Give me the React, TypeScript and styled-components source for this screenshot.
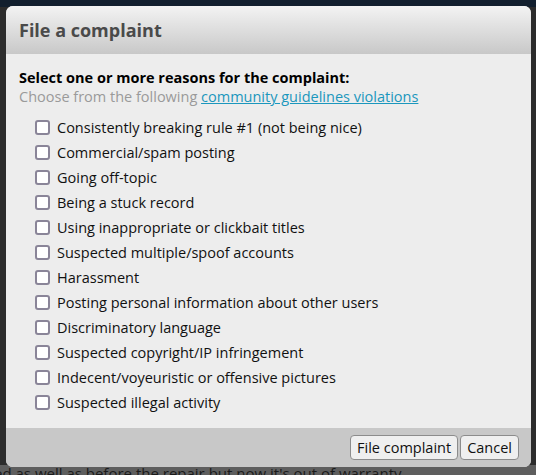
import { useState } from "react";
import styled, { createGlobalStyle } from "styled-components";

const reasons = [
  "Consistently breaking rule #1 (not being nice)",
  "Commercial/spam posting",
  "Going off-topic",
  "Being a stuck record",
  "Using inappropriate or clickbait titles",
  "Suspected multiple/spoof accounts",
  "Harassment",
  "Posting personal information about other users",
  "Discriminatory language",
  "Suspected copyright/IP infringement",
  "Indecent/voyeuristic or offensive pictures",
  "Suspected illegal activity",
];

const GlobalStyle = createGlobalStyle`
  html, body {
    margin: 0;
    padding: 0;
    background: #2e2e2e;
    font-family: "Open Sans", "Noto Sans", sans-serif;
    overflow: hidden;
  }
`;

const Page = styled.div`
  position: relative;
  width: 536px;
  height: 475px;
  display: flex;
  flex-direction: column;
  background: #2c2c2c;
`;

const TopBar = styled.div`
  height: 7px;
  background: #121f2e;
`;

const PageBody = styled.div`
  flex: 1;
`;

const PageText = styled.div`
  height: 10px;
  text-indent: -6px;
  background: #5e5e5e;
  color: #1a1a1a;
  font-size: 15px;
  line-height: 17px;
  overflow: hidden;
  white-space: nowrap;
`;

const Dialog = styled.div`
  position: absolute;
  top: 6px;
  left: 6px;
  width: 525px;
  height: 461px;
  border-radius: 7px;
  overflow: hidden;
  display: flex;
  flex-direction: column;
  background: #ededed;
`;

const Header = styled.div`
  height: 48px;
  display: flex;
  align-items: center;
  padding: 0 13px;
  background: linear-gradient(#f3f3f3, #c8c8c8);
`;

const Title = styled.h2`
  margin: 0;
  font-size: 18px;
  font-weight: 700;
  color: #4a4a4a;
`;

const Body = styled.div`
  flex: 1;
  padding: 14px 13px 0;
`;

const Heading = styled.div`
  font-size: 14.5px;
  line-height: 19px;
  font-weight: 700;
  color: #000;
`;

const Hint = styled.div`
  font-size: 14.5px;
  line-height: 19px;
  color: #9a9a9a;

  a {
    color: #1b97bd;
    text-decoration: underline;
  }
`;

const List = styled.ul`
  list-style: none;
  margin: 9px 0 0;
  padding: 0 0 0 16px;
`;

const Row = styled.li`
  height: 25px;
  display: flex;
  align-items: center;
  gap: 7px;
  font-size: 14.5px;
  color: #111;
  cursor: pointer;
`;

const Box = styled.span<{ $checked: boolean }>`
  width: 15px;
  height: 15px;
  box-sizing: border-box;
  border: 2px solid #8a8598;
  border-radius: 3px;
  background: ${(p) => (p.$checked ? "#1b97bd" : "#fff")};
  flex-shrink: 0;
`;

const Footer = styled.div`
  height: 39px;
  display: flex;
  align-items: center;
  justify-content: flex-end;
  gap: 2px;
  padding: 0 12px;
  background: #c8c8c8;
`;

const Button = styled.button`
  height: 25px;
  padding: 0 6px;
  font-family: inherit;
  font-size: 14.5px;
  color: #111;
  background: #efefef;
  border: 1px solid #8c8c8c;
  border-radius: 4px;
  cursor: pointer;
`;

export default function App() {
  const [checked, setChecked] = useState<boolean[]>(reasons.map(() => false));

  const toggle = (i: number) =>
    setChecked((prev) => prev.map((v, j) => (j === i ? !v : v)));

  return (
    <>
      <GlobalStyle />
      <Page>
        <TopBar />
        <PageBody />
        <PageText>ed as well as before the repair but now it's out of warranty.</PageText>

        <Dialog>
          <Header>
            <Title>File a complaint</Title>
          </Header>
          <Body>
            <Heading>Select one or more reasons for the complaint:</Heading>
            <Hint>
              Choose from the following <a href="#">community guidelines violations</a>
            </Hint>
            <List>
              {reasons.map((r, i) => (
                <Row key={r} onClick={() => toggle(i)}>
                  <Box $checked={checked[i]} />
                  {r}
                </Row>
              ))}
            </List>
          </Body>
          <Footer>
            <Button>File complaint</Button>
            <Button>Cancel</Button>
          </Footer>
        </Dialog>
      </Page>
    </>
  );
}
